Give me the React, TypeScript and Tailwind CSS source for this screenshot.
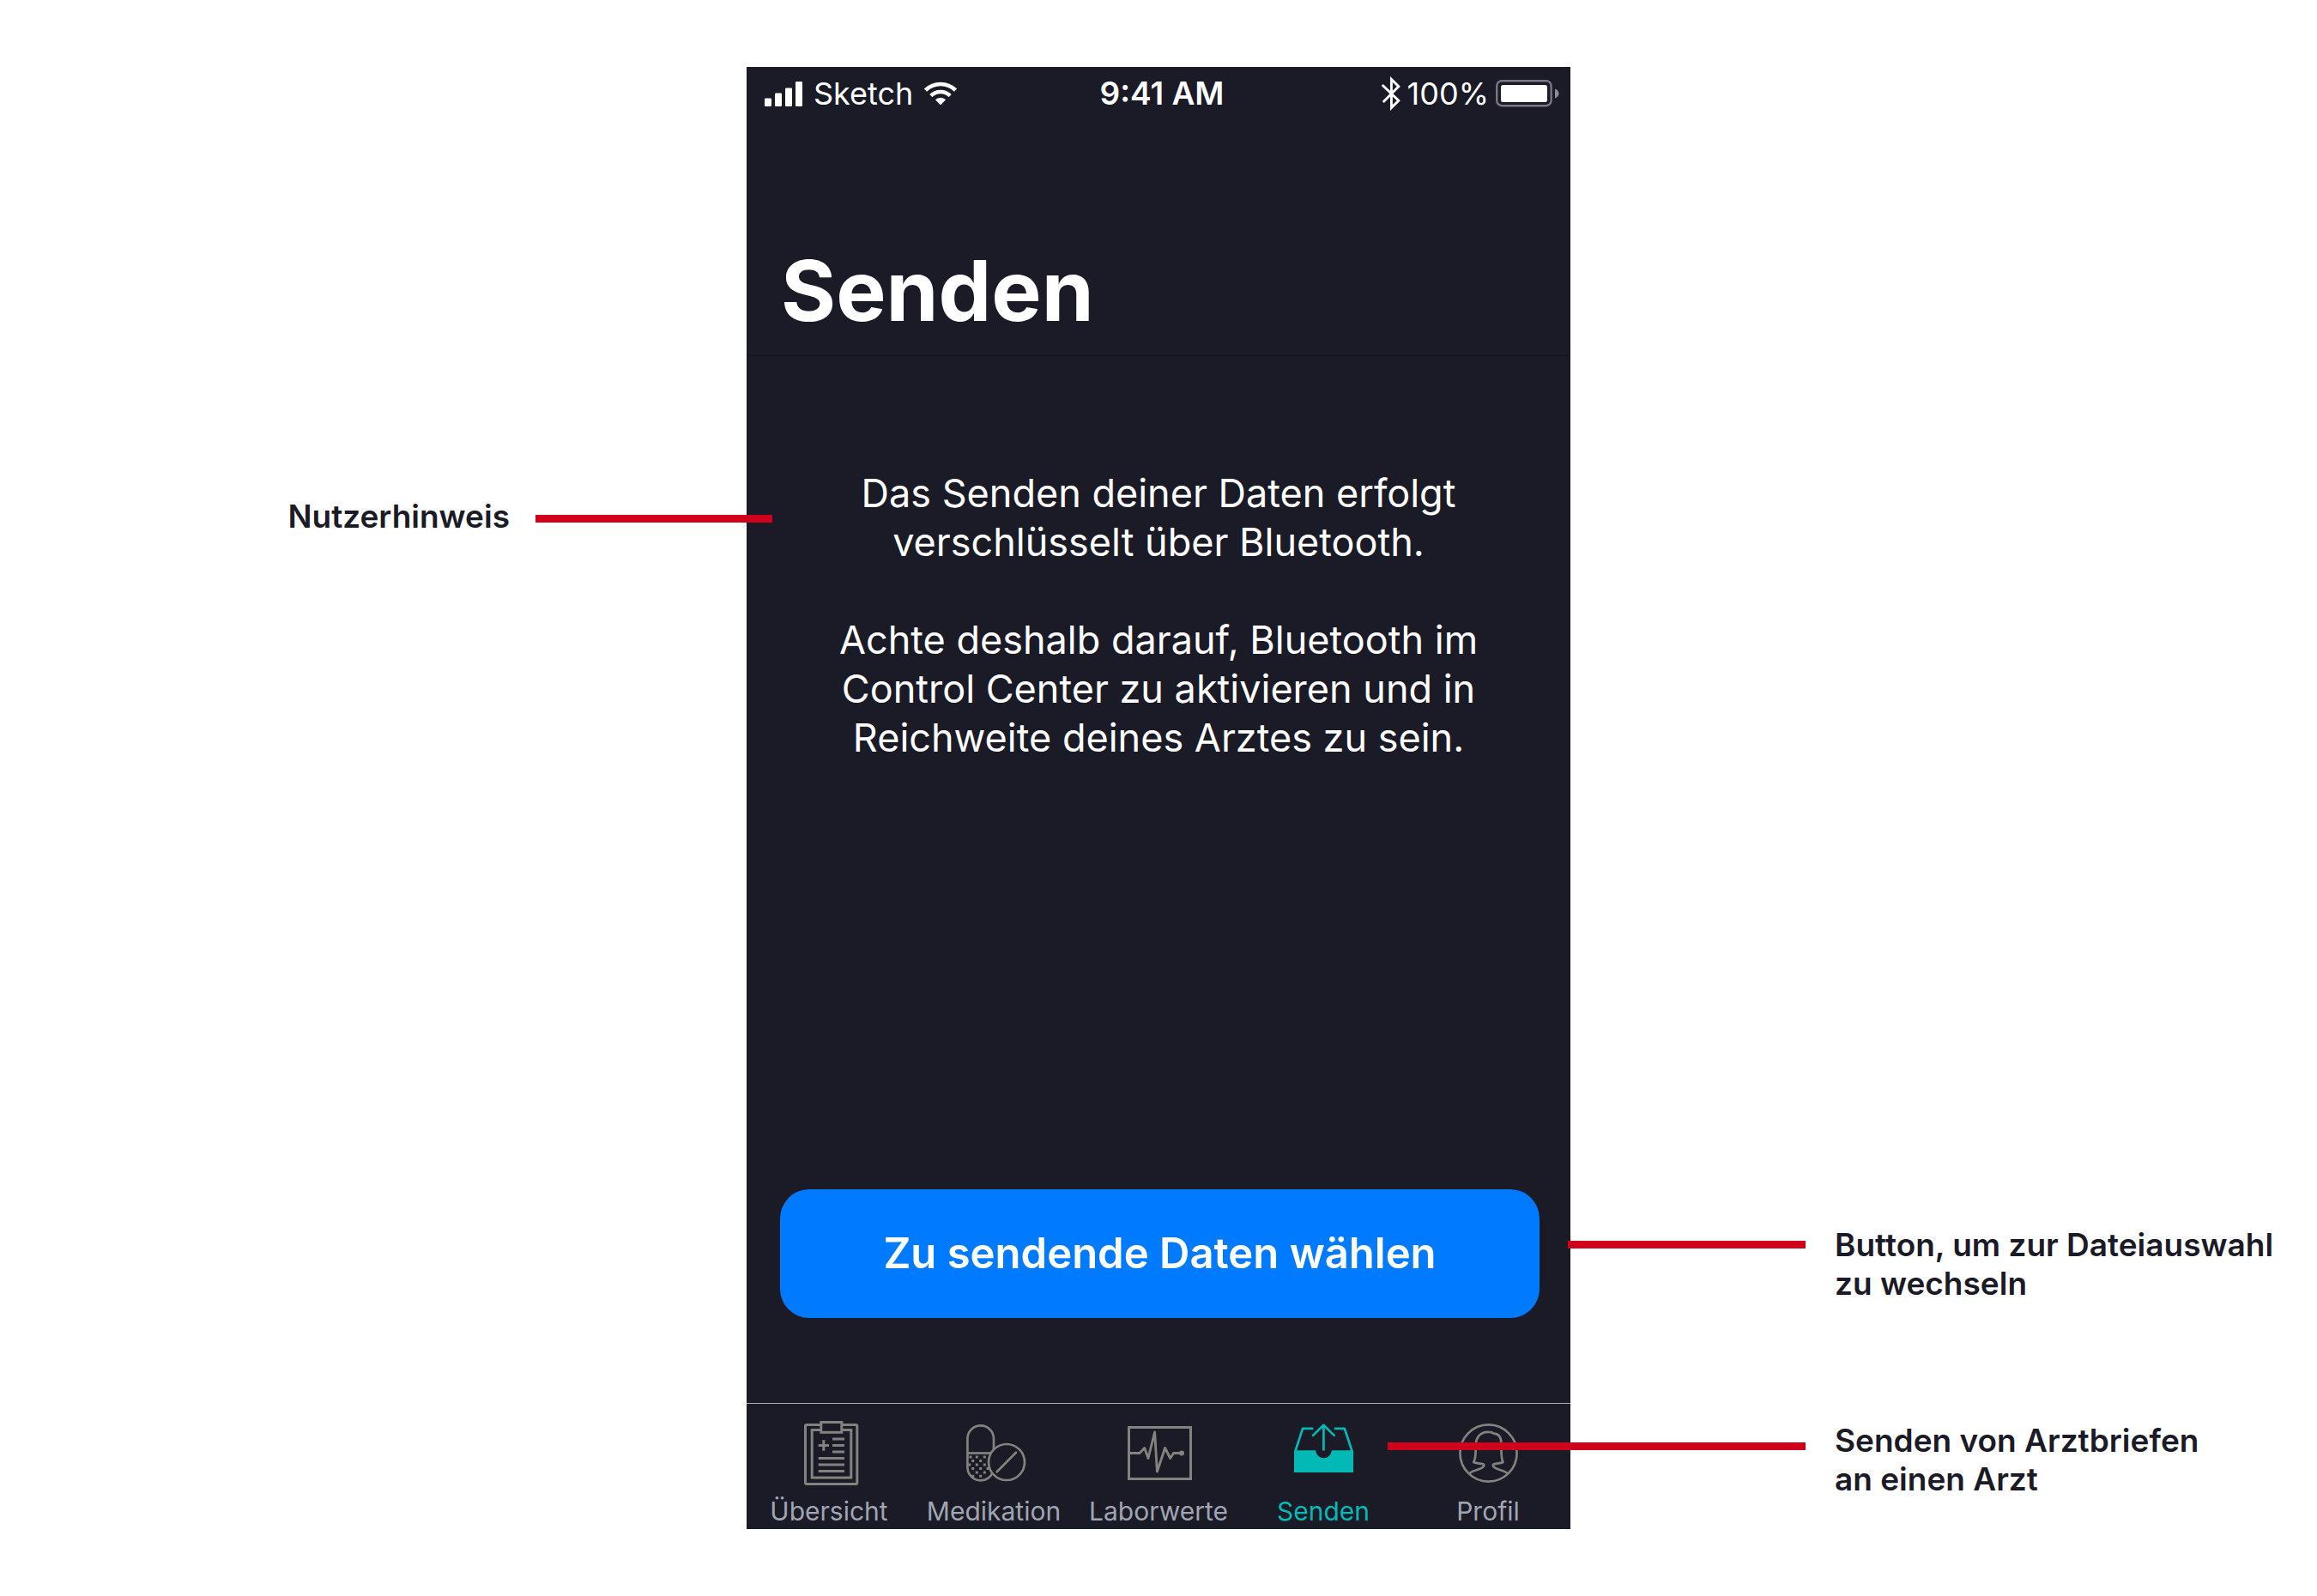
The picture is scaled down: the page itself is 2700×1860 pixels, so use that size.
import type { ReactNode } from "react";

function SignalBars() {
  return (
    <svg className="h-[29px] w-[44px]" viewBox="0 0 44 29" fill="currentColor" aria-hidden="true">
      <rect x="0" y="19.5" width="8" height="9.5" rx="1.2" />
      <rect x="12" y="13.5" width="8" height="15.5" rx="1.2" />
      <rect x="24" y="7.5" width="8" height="21.5" rx="1.2" />
      <rect x="36" y="0" width="8" height="29" rx="1.2" />
    </svg>
  );
}

function WifiIcon() {
  return (
    <svg className="h-[28px] w-[38px]" viewBox="0 0 38 28" fill="none" aria-hidden="true">
      <path d="M1.4 10.2 A25 25 0 0 1 36.6 10.2" stroke="currentColor" strokeWidth="4.6" />
      <path d="M7.8 16.6 A15.9 15.9 0 0 1 30.2 16.6" stroke="currentColor" strokeWidth="4.4" />
      <path d="M19 27.2 L12.9 21.3 A8.6 8.6 0 0 1 25.1 21.3 Z" fill="currentColor" />
    </svg>
  );
}

function BluetoothIcon() {
  return (
    <svg className="h-[40px] w-[22px]" viewBox="0 0 22 40" fill="none" stroke="currentColor" strokeWidth="2.9" aria-hidden="true">
      <path d="M0.8 10 L19.8 28.2 L11.4 36.6 V3.400 L19.8 11.8 L1.8 30" />
    </svg>
  );
}

function BatteryIcon() {
  return (
    <svg className="h-[32px] w-[74px]" viewBox="0 0 74 32" fill="none" aria-hidden="true">
      <rect x="1.2" y="1.2" width="63.4" height="29" rx="6" stroke="#7a7983" strokeWidth="2.4" />
      <rect x="6" y="6" width="54" height="20" rx="2.5" fill="currentColor" />
      <path d="M69 10.5 C75 12.5 75 19.5 69 21.5 Z" fill="#8d8c94" />
    </svg>
  );
}

const iconClass = "size-20";

function ClipboardIcon() {
  return (
    <svg className={iconClass} viewBox="0 0 80 80" fill="none" stroke="#84827f" strokeWidth="3" aria-hidden="true">
      <rect x="12.5" y="5.5" width="60.3" height="69" rx="1.5" />
      <rect x="20.2" y="11.5" width="45.6" height="55.6" />
      <rect x="30.8" y="2.5" width="24" height="11.8" fill="#1b1a27" />
      <path d="M27.7 29.5 H40 M33.8 23.3 V35.7" />
      <path d="M44 22 H58 M44 29.5 H58 M44 37 H58 M27.7 44.5 H58 M27.7 52 H58 M27.7 59.5 H58" />
    </svg>
  );
}

const pillDots = [
  [13, 43], [20.3, 43], [29.3, 43],
  [15.7, 47.5], [24.7, 47.5],
  [11.8, 52], [20.3, 52], [29.3, 52],
  [15.7, 56.5], [24.7, 56.5], [33, 56.5],
  [20.3, 61], [29.3, 61],
  [15.7, 65.3], [24.7, 65.3],
];

function PillsIcon() {
  return (
    <svg className={iconClass} viewBox="0 0 80 80" fill="none" stroke="#84827f" strokeWidth="2.7" aria-hidden="true">
      <rect x="9.4" y="6.4" width="30.6" height="64" rx="15.3" />
      <path d="M9.4 38.5 H40" />
      {pillDots.map(([x, y]) => (
        <rect key={`${x}-${y}`} x={x - 1.5} y={y - 1.5} width="3" height="3" fill="#84827f" stroke="none" />
      ))}
      <circle cx="55" cy="49" r="21" fill="#1b1a27" />
      <path d="M43.7 60.3 L66 37.7" strokeLinecap="round" />
    </svg>
  );
}

function PulseIcon() {
  return (
    <svg className={iconClass} viewBox="0 0 80 80" fill="none" stroke="#84827f" strokeWidth="3" aria-hidden="true">
      <rect x="5.5" y="8.5" width="72" height="60" />
      <path
        d="M6 38.5 H18 L23.7 32.5 L28 44.5 L35.6 14 L38.4 60 L47.6 32.5 L53.7 44.5 L57.5 38.5 H67"
        strokeWidth="2.9"
        strokeLinejoin="round"
      />
      <circle cx="67" cy="38.5" r="3" fill="#84827f" stroke="none" />
    </svg>
  );
}

function SendTrayIcon() {
  return (
    <svg className={iconClass} viewBox="0 0 80 80" fill="none" stroke="#02b9b5" strokeWidth="2.7" aria-hidden="true">
      <path d="M6 35.3 H31 A9.6 10.4 0 0 0 50 35.3 H75 V61 H6 Z" fill="#02b9b5" stroke="none" />
      <path d="M7.5 36 L16 9.8 H28.3 M52.8 9.8 H64.8 L73.5 36" strokeLinejoin="round" />
      <path d="M40.4 35.5 V5.8 M27.3 18.6 L40.4 5.8 L53.5 18.6" strokeLinejoin="round" />
    </svg>
  );
}

function ProfileIcon() {
  return (
    <svg className={iconClass} viewBox="0 0 80 80" fill="none" stroke="#84827f" strokeWidth="2.7" aria-hidden="true">
      <circle cx="40.5" cy="38.5" r="33.1" />
      <path
        d="M17.8 63 C20 59 28 58.5 32 56.2 C35.5 54 36.5 51.6 33.5 51 C30 50.4 26 50.6 23.2 49 C26 45 25.5 40 25.7 30 C25.7 20 31 13.8 40 13.8 C44 13.8 45.5 14.6 46.5 15.6 C52.5 15.8 55.5 20 55.5 28 C55.6 40 55 45 57.5 49 C55 50.6 51 50.4 47.5 51 C44.5 51.6 45.5 54 49 56.2 C53 58.5 61 59 63.3 63"
        strokeLinejoin="round"
      />
    </svg>
  );
}

const tabs = [
  { id: "uebersicht", label: "Übersicht", icon: <ClipboardIcon /> },
  { id: "medikation", label: "Medikation", icon: <PillsIcon /> },
  { id: "laborwerte", label: "Laborwerte", icon: <PulseIcon /> },
  { id: "senden", label: "Senden", icon: <SendTrayIcon />, active: true },
  { id: "profil", label: "Profil", icon: <ProfileIcon /> },
];

function StatusBar() {
  return (
    <div className="grid h-[62px] grid-cols-[1fr_auto_1fr] items-center pr-[13px] pl-[21px] text-[36px] leading-[44px]">
      <div className="flex items-center gap-[13px]">
        <SignalBars />
        <span>Sketch</span>
        <WifiIcon />
      </div>
      <time className="text-[37px] font-semibold">9:41 AM</time>
      <div className="flex items-center justify-end gap-[8px]">
        <BluetoothIcon />
        <span>100%</span>
        <BatteryIcon />
      </div>
    </div>
  );
}

function Phone() {
  return (
    <section className="flex flex-col bg-[#1b1a27] text-white">
      <header className="border-b border-[#13121c] pb-[15px]">
        <StatusBar />
        <h1 className="px-10 pt-[139px] text-[98px] leading-[120px] font-bold">Senden</h1>
      </header>

      <div className="flex flex-1 flex-col pt-[131px] pb-[99px]">
        <div className="flex flex-col gap-[57px] text-center text-[45px] leading-[57px]">
          <p>
            Das Senden deiner Daten erfolgt
            <br />
            verschlüsselt über Bluetooth.
          </p>
          <p>
            Achte deshalb darauf, Bluetooth im
            <br />
            Control Center zu aktivieren und in
            <br />
            Reichweite deines Arztes zu sein.
          </p>
        </div>
        <button
          type="button"
          className="mt-auto mr-9 ml-[39px] h-[150px] rounded-[34px] bg-[#007aff] text-[49px] leading-[60px] font-semibold"
        >
          Zu sendende Daten wählen
        </button>
      </div>

      <nav className="grid grid-cols-5 border-t border-[#aeadb3] pt-[19px] pb-[3px]">
        {tabs.map((tab) => (
          <a
            key={tab.id}
            href={`#${tab.id}`}
            aria-current={tab.active ? "page" : undefined}
            className={
              tab.active
                ? "flex flex-col items-center gap-2 text-[30px] leading-[36px] text-[#02b9b5]"
                : "flex flex-col items-center gap-2 text-[30px] leading-[36px] text-[#a0a5b2]"
            }
          >
            {tab.icon}
            {tab.label}
          </a>
        ))}
      </nav>
    </section>
  );
}

function Note({ rule, children }: { rule: string; children: ReactNode }) {
  return (
    <div className="flex items-start gap-[34px]">
      <div className={`z-10 h-[9px] shrink-0 bg-[#d0021b] ${rule}`} />
      <p className="whitespace-nowrap">{children}</p>
    </div>
  );
}

export default function App() {
  return (
    <main
      className="grid min-h-screen grid-cols-[29fr_32fr_29fr] bg-white py-[78px] text-[37px] leading-[45px] font-semibold text-[#1b1a27]"
      style={{ fontFamily: 'Inter, "Liberation Sans", sans-serif' }}
    >
      <aside className="pt-[501px]">
        <div className="flex items-start justify-end gap-[30px]">
          <p>Nutzerhinweis</p>
          <div className="z-10 mt-[21px] -mr-[30px] h-[9px] w-[276px] shrink-0 bg-[#d0021b]" />
        </div>
      </aside>

      <div className="grid font-normal">
        <Phone />
      </div>

      <aside className="flex flex-col gap-[138px] pt-[1350px]">
        <Note rule="mt-[18px] -ml-[3px] w-[277px]">
          Button, um zur Dateiauswahl
          <br />
          zu wechseln
        </Note>
        <Note rule="mt-[25px] -ml-[213px] w-[487px]">
          Senden von Arztbriefen
          <br />
          an einen Arzt
        </Note>
      </aside>
    </main>
  );
}
